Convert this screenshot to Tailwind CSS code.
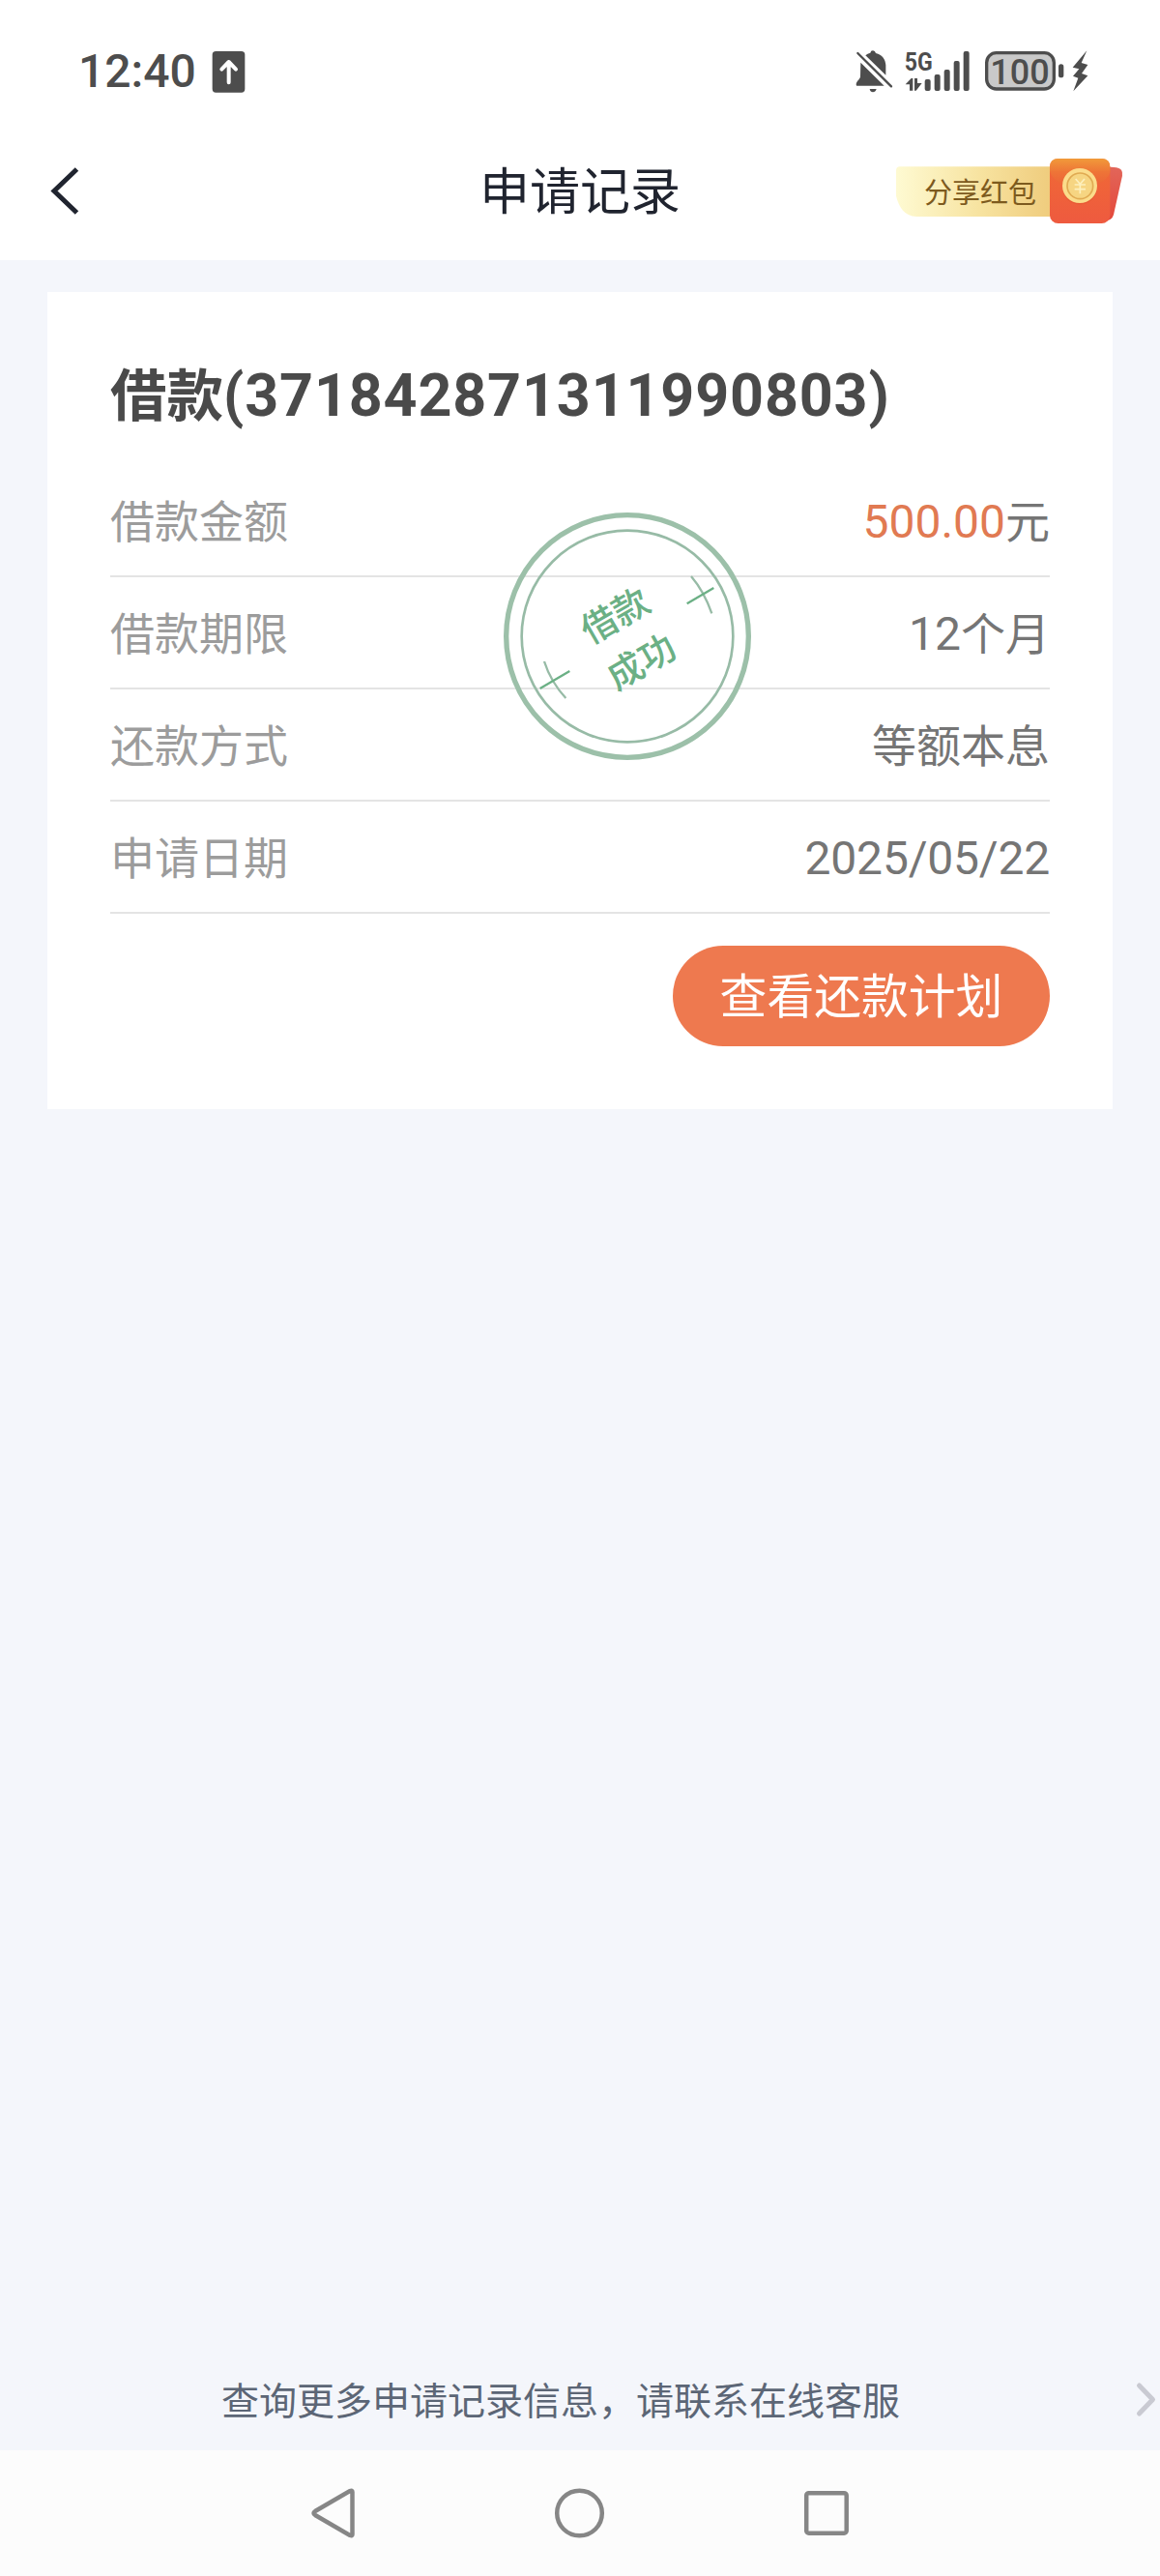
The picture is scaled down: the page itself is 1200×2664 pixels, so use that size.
<!DOCTYPE html>
<html lang="zh-CN">
<head>
<meta charset="utf-8">
<title>申请记录</title>
<script src="https://cdn.jsdelivr.net/npm/@tailwindcss/browser@4"></script>
</head>
<body class="w-[1200px] h-[2664px] bg-[#f4f6fb] flex flex-col overflow-hidden font-['Roboto','Noto_Sans_CJK_SC',sans-serif]">

<!-- status bar -->
<div class="h-[136px] shrink-0 bg-white flex items-start justify-between pt-[50px] pl-[81px] pr-[74px] text-[#4d4d4d]">
  <div class="flex items-start">
    <span class="w-[138px] h-[48px] leading-[48px] text-[48px] font-medium">12:40</span>
    <svg class="w-[36px] h-[48px]" viewBox="537 60 108 144"><rect x="539" y="69" width="101" height="128" rx="11" fill="#4d4d4d"/><path d="M590 166V102M568 125L590 102L612 125" fill="none" stroke="#fff" stroke-width="12" stroke-linecap="round" stroke-linejoin="round"/></svg>
  </div>
  <div class="flex items-start">
    <svg class="w-[42px] h-[48px]" viewBox="72 60 126 144" fill="#4d4d4d">
      <path d="M106 82Q112 76 121 74Q122 67 129 67Q136 67 138 75C158 80 168 94 169 112V143Z"/>
      <path d="M91 104L164 176H79Q77 176 77 171C79 160 88 158 90 148Z"/>
      <path d="M119 186H140Q137 196 129 196Q121 196 119 186Z"/>
      <path d="M82 75L186 178" stroke="#4d4d4d" stroke-width="7" stroke-linecap="round"/>
    </svg>
    <svg class="w-[70px] h-[48px] ml-[9px] overflow-visible" viewBox="225 60 210 144" fill="#4d4d4d">
      <text x="227" y="129" font-family="Roboto, sans-serif" font-size="80" font-weight="700" textLength="87" lengthAdjust="spacingAndGlyphs">5G</text>
      <path d="M230 172L248 153H253V191H243V172ZM258 153H267V168H281L263 191H258Z"/>
      <rect x="290" y="156" width="18" height="36" rx="6"/><rect x="320" y="141" width="18" height="51" rx="6"/><rect x="350" y="126" width="18" height="66" rx="6"/><rect x="380" y="99" width="18" height="93" rx="6"/><rect x="410" y="69" width="18" height="123" rx="6"/>
    </svg>
    <svg class="w-[84px] h-[48px] ml-[13px] overflow-visible" viewBox="474 60 252 144" fill="#4d4d4d">
      <rect x="482" y="74" width="209" height="112" rx="30" fill="#c9c9c9" stroke="#4d4d4d" stroke-width="10"/>
      <text x="493" y="172" font-family="Roboto, sans-serif" font-size="110" font-weight="500" textLength="184" lengthAdjust="spacingAndGlyphs">100</text>
      <rect x="705" y="109" width="16" height="42" rx="8"/>
    </svg>
    <svg class="w-[18px] h-[48px] ml-[6px]" viewBox="744 60 54 144"><path d="M793 67L749 119L769 124L750 146L766 152L751 193L796 145L777 138L796 111L776 105Z" fill="#4d4d4d"/></svg>
  </div>
</div>

<!-- title bar -->
<header class="h-[133px] shrink-0 bg-white grid grid-cols-[1fr_auto_1fr] items-start text-[#20242f]">
  <svg class="w-[36px] h-[60px] ml-[49px] mt-[32px]" viewBox="0 0 36 60"><path d="M30.500 7L7 29.500L30.500 52" fill="none" stroke="#20242f" stroke-width="5"/></svg>
  <h1 class="text-[52px] leading-[60px] mt-[34px] w-[208px] whitespace-nowrap">申请记录</h1>
  <svg class="w-[240px] h-[74px] mt-[26px] mr-[35px] justify-self-end" viewBox="75 66 720 222">
    <defs>
      <linearGradient id="ribbon"><stop offset="0" stop-color="#fefad2"/><stop offset=".5" stop-color="#f7e3a0"/><stop offset="1" stop-color="#eec877"/></linearGradient>
      <linearGradient id="pack" x2="0" y2="1"><stop offset="0" stop-color="#f06a35"/><stop offset="1" stop-color="#ee5a3f"/></linearGradient>
      <linearGradient id="flap" x2="0" y2="1"><stop offset="0" stop-color="#f19a3a"/><stop offset=".45" stop-color="#ee7437"/><stop offset="1" stop-color="#ec5f38"/></linearGradient>
      <linearGradient id="back" x2="0" y2="1"><stop offset="0" stop-color="#e2665a"/><stop offset="1" stop-color="#e4483a"/></linearGradient>
    </defs>
    <path d="M93 97H600V252H145C105 250 90 222 81 188V109Q81 97 93 97Z" fill="url(#ribbon)"/>
    <text x="168" y="211" font-family="Noto Sans CJK SC, sans-serif" font-size="87" textLength="348" fill="#7d5a1e">分享红包</text>
    <path d="M715 95L765 100Q786 103 783 125L756 246Q750 266 728 264Z" fill="url(#back)"/>
    <rect x="558" y="72" width="187" height="201" rx="26" fill="url(#pack)"/>
    <path d="M558 110V98Q558 72 584 72H719Q745 72 745 98V115C735 145 690 165 651 165S568 145 558 110Z" fill="url(#flap)"/>
    <circle cx="651" cy="161" r="54" fill="#e0502a" opacity=".35"/>
    <circle cx="651" cy="156" r="54" fill="#fbdc8b"/>
    <circle cx="652" cy="157" r="40" fill="#f6d582" stroke="#e0aa52" stroke-width="5"/>
    <path d="M638 135L652 151L666 135M652 151V181M635 153H669M635 167H669" fill="none" stroke="#fdf0bd" stroke-width="5"/>
  </svg>
</header>

<!-- loan card -->
<main class="relative mx-[49px] mt-[33px] h-[845px] shrink-0 bg-white px-[65px] flex flex-col">
  <h2 class="pt-[68px] h-[180px] flex items-baseline leading-[78px] font-bold text-[#4a4a4a] whitespace-nowrap"><span class="text-[58.5px]">借款</span><span class="text-[61px] tracking-[0.85px]">(371842871311990803)</span></h2>
  <dl class="text-[46px] text-[#757575] leading-[60px]">
    <div class="h-[115px] border-b-2 border-[#e4e4e4] flex items-baseline justify-between pt-[28px]"><dt class="text-[#9c9c9c]">借款金额</dt><dd><span class="text-[48px] text-[#e17a52]">500.00</span>元</dd></div>
    <div class="h-[116px] border-b-2 border-[#e4e4e4] flex items-baseline justify-between pt-[29px]"><dt class="text-[#9c9c9c]">借款期限</dt><dd><span class="text-[48px]">12</span>个月</dd></div>
    <div class="h-[116px] border-b-2 border-[#e4e4e4] flex items-baseline justify-between pt-[29px]"><dt class="text-[#9c9c9c]">还款方式</dt><dd>等额本息</dd></div>
    <div class="h-[116px] border-b-2 border-[#e4e4e4] flex items-baseline justify-between pt-[29px]"><dt class="text-[#9c9c9c]">申请日期</dt><dd class="text-[48px] tracking-[-0.2px]">2025/05/22</dd></div>
  </dl>
  <button class="self-end mt-[33px] w-[390px] h-[104px] rounded-full bg-[#ee794f] text-white text-[48.800px] leading-[100px] pt-[4px] whitespace-nowrap">查看还款计划</button>

  <svg class="absolute left-[471px] top-[226px] w-[260px] h-[260px]" viewBox="60 84 780 780" fill="none">
    <circle cx="447" cy="474" r="376" stroke="#9cc0a9" stroke-width="16"/>
    <circle cx="447" cy="474" r="328" stroke="#97bba6" stroke-width="8"/>
    <g font-family="Noto Sans CJK SC, sans-serif" font-size="112" font-weight="500" fill="#6bb085" text-anchor="middle">
      <text transform="translate(408 409) rotate(-30)" y="42">借款</text>
      <text transform="translate(489 552) rotate(-30)" y="42">成功</text>
    </g>
    <g stroke-width="7"><path d="M645 288Q685 335 709 403M189 552Q209 615 256 666" stroke="#97bba6"/><path d="M632 373L715 324M176 636L268 582" stroke="#6bb085"/></g>
  </svg>
</main>

<!-- contact link -->
<footer class="mt-auto h-[104px] shrink-0 flex items-center justify-between pl-[229px] text-[#5c6676]">
  <span class="text-[39px] leading-[60px] pt-[3px] whitespace-nowrap">查询更多申请记录信息，请联系在线客服</span>
  <svg class="w-[26px] h-[40px]" viewBox="0 0 26 40"><path d="M4.500 5L18.500 19.500L4.500 34" fill="none" stroke="#c9cad2" stroke-width="5" stroke-linecap="round" stroke-linejoin="round"/></svg>
</footer>

<!-- system navigation -->
<nav class="h-[130px] shrink-0 bg-[#fcfcfc] flex items-start pt-[36px] pl-[318px]">
  <svg class="w-[54px] h-[58px]" viewBox="0 0 54 58"><path d="M46.500 7V51Q46.500 53 44 52L8 31Q5 29 8 27L44 6Q46.500 5 46.500 7Z" fill="none" stroke="#868686" stroke-width="4.500"/></svg>
  <svg class="w-[58px] h-[58px] ml-[196px]" viewBox="0 0 58 58"><circle cx="31.500" cy="29" r="23.300" fill="none" stroke="#868686" stroke-width="4.500"/></svg>
  <svg class="w-[58px] h-[58px] ml-[200px]" viewBox="0 0 58 58"><rect x="8.200" y="8.200" width="41.500" height="41.500" rx="2.500" fill="none" stroke="#868686" stroke-width="4.500"/></svg>
</nav>
</body>
</html>
